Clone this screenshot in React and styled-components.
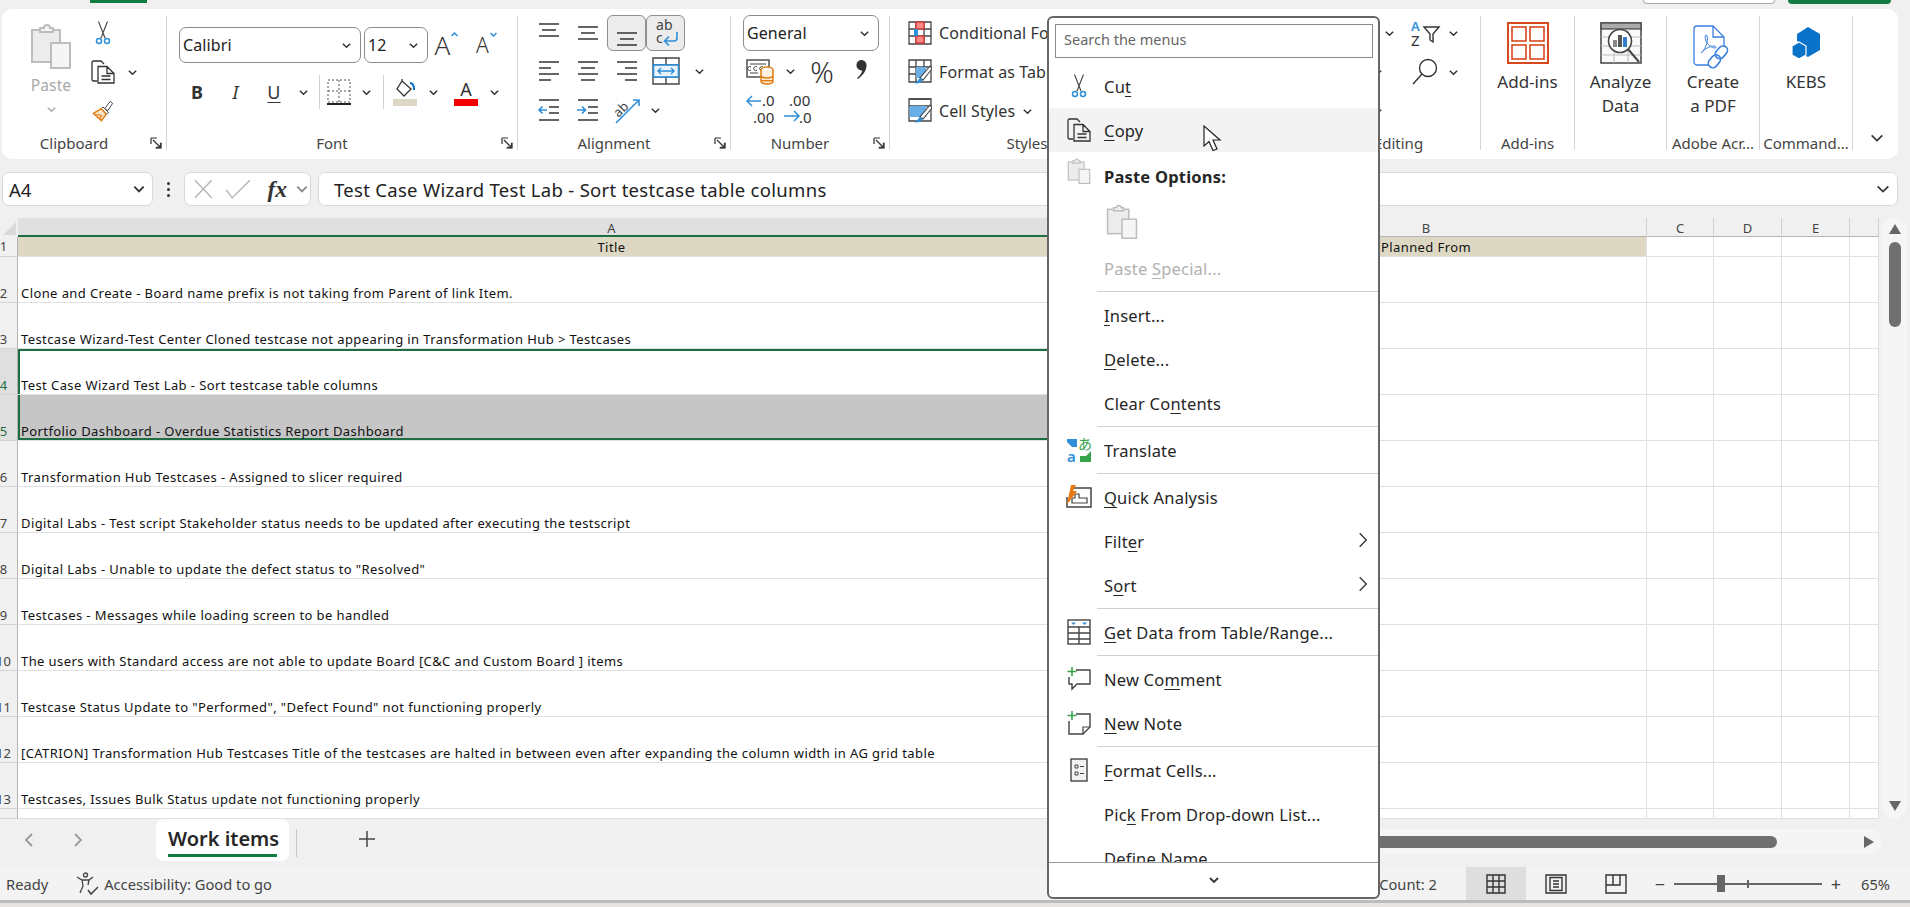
import React from 'react'
import styled, { createGlobalStyle } from 'styled-components'

const GlobalStyle = createGlobalStyle`
  html, body { margin: 0; padding: 0; background: #f0f0f0; }
  body { width: 1910px; height: 907px; overflow: hidden; font-family: "Noto Sans", "Open Sans", sans-serif; color: #262626; }
  * { box-sizing: border-box; }
`

const GREEN = '#1f6e43'
const BLUE = '#2f8fd8'

/* icons */
const Chevron = ({ size = 11, dir = 'down', color = '#333', width = 1.6 }) => {
  const paths = { down: 'M2 4l4 4 4-4', up: 'M2 8l4-4 4 4', left: 'M8 2L4 6l4 4', right: 'M4 2l4 4-4 4' }
  return (
    <svg width={size} height={size} viewBox="0 0 12 12" fill="none">
      <path d={paths[dir]} stroke={color} strokeWidth={width} />
    </svg>
  )
}

const Scissors = () => (
  <svg width="16" height="24" viewBox="0 0 16 24" fill="none">
    <path d="M3.500 0.500L10 17M12.500 0.500L6 17" stroke="#444" strokeWidth="1.1" />
    <circle cx="4" cy="20" r="2.500" stroke={BLUE} strokeWidth="1.5" />
    <circle cx="12" cy="20" r="2.500" stroke={BLUE} strokeWidth="1.5" />
  </svg>
)

const CopyIcon = () => (
  <svg width="24" height="24" viewBox="0 0 24 24" fill="none" stroke="#333" strokeWidth="1.3">
    <path d="M6 21H2.500A1.500 1.500 0 0 1 1 19.500V2.500A1.500 1.500 0 0 1 2.500 1H10l3 3" />
    <path d="M7 6.500H16l7 7V23H7zM16 6.500V13.500H23M10.500 16H19.500M10.500 19.500H19.500" />
  </svg>
)

const PainterIcon = () => (
  <svg width="24" height="24" viewBox="0 0 26 30" fill="none">
    <path d="M15 12L22 3l3 2.500-6 9z" fill="#fff" stroke="#444" strokeWidth="1.2" />
    <path d="M13 10l7 7-3 2L11 12z" fill="#fff" stroke="#444" strokeWidth="1.2" />
    <path d="M11 12L1 18l10 9 6-8z" fill="#fbe3c6" stroke="#e07c12" strokeWidth="1.8" />
    <path d="M5 19l7 2M9 25l2-5" stroke="#e07c12" strokeWidth="1.4" />
  </svg>
)

const PasteBoard = ({ w = 42, h = 46 }) => (
  <svg width={w} height={h} viewBox="0 0 42 46" fill="none" stroke="#bdbdbd" strokeWidth="2">
    <rect x="2" y="7" width="28" height="32" fill="#ececec" />
    <path d="M10 9V5h4a3 3 0 0 1 6 0h3v4z" fill="#f4f4f4" />
    <rect x="21" y="20" width="19" height="25" fill="#f5f5f5" />
  </svg>
)

const Launcher = () => (
  <svg width="12" height="12" viewBox="0 0 12 12" fill="none" stroke="#333" strokeWidth="1.2">
    <path d="M11 5.500V11H5.500M1 1h6M1 1v6" />
    <path d="M3 3l7 7M6 10.500h4.500V6" strokeWidth="1.3" />
  </svg>
)

const AlignLines = ({ rows }) => (
  <svg width="22" height="30" viewBox="0 0 22 30" stroke="#333" strokeWidth="1.5">
    {rows.map(([y, a, b]) => (
      <line key={y} x1={a} y1={y} x2={b} y2={y} />
    ))}
  </svg>
)

const IndentIcon = ({ flip }) => (
  <svg width="24" height="24" viewBox="0 0 24 24" fill="none">
    <path d="M2 2h20M12 9h10M12 15h10M2 22h20" stroke="#333" strokeWidth="1.5" />
    {flip ? (
      <path d="M1 12h8M6 8.500L9.500 12 6 15.500" stroke={BLUE} strokeWidth="1.6" />
    ) : (
      <path d="M10 12H2M5.500 8.500L2 12l3.500 3.500" stroke={BLUE} strokeWidth="1.6" />
    )}
  </svg>
)

const WrapIcon = () => (
  <svg width="26" height="34" viewBox="0 0 26 34" fill="none">
    <text x="3" y="14" fontFamily="Noto Sans, sans-serif" fontSize="14" fill="#444">ab</text>
    <text x="3" y="27" fontFamily="Noto Sans, sans-serif" fontSize="14" fill="#444">c</text>
    <path d="M24 16v6a3 3 0 0 1-3 3H12M16 20.500L11.500 25l4.500 4.500" stroke={BLUE} strokeWidth="1.6" />
  </svg>
)

const MergeIcon = () => (
  <svg width="28" height="28" viewBox="0 0 28 28" fill="none" stroke="#444" strokeWidth="1.4">
    <path d="M1 1h26v26H1zM1 8h26M1 20h26M14 1v7M14 20v7" />
    <rect x="1.500" y="8" width="25" height="12" fill="#e8f3fb" stroke={BLUE} strokeWidth="1.6" />
    <path d="M6 14h16M9 11l-3 3 3 3M19 11l3 3-3 3" stroke={BLUE} strokeWidth="1.4" />
  </svg>
)

const OrientIcon = () => (
  <svg width="34" height="30" viewBox="0 0 34 30" fill="none">
    <text x="4" y="20" transform="rotate(-45 10 16)" fontFamily="Noto Sans, sans-serif" fontSize="13" fill="#444">ab</text>
    <path d="M6 28L28 6M23 5h6v6" stroke={BLUE} strokeWidth="1.6" />
  </svg>
)

const AccountingIcon = () => (
  <svg width="30" height="30" viewBox="0 0 30 30" fill="none">
    <rect x="1" y="4" width="22" height="17" fill="#fff" stroke="#444" strokeWidth="1.4" />
    <path d="M4 8h16M4 17h8" stroke="#444" strokeWidth="1.2" />
    <path d="M5 14a2 2 0 1 1 0-3M11 14a2 2 0 1 1 0-3M17 14a2 2 0 1 1 0-3" stroke="#444" strokeWidth="1" />
    <ellipse cx="21" cy="14" rx="6" ry="3" fill="#fff" stroke="#e07c12" strokeWidth="1.5" />
    <path d="M15 14v11c0 4 12 4 12 0V14M15 19c0 4 12 4 12 0M15 24c0 1 12 1 12 0" fill="#fdf0df" stroke="#e07c12" strokeWidth="1.5" />
  </svg>
)

const CommaIcon = () => (
  <svg width="11" height="19" viewBox="0 0 11 19" fill="#333">
    <path d="M5.500 0a5 5 0 0 1 5 5.500c0 5-3.500 10-8.500 13.500L1 18c3-2.500 4.800-5 5.200-7.600A5 5 0 0 1 .5 5 5 5 0 0 1 5.500 0z" />
  </svg>
)

const DecimalIcon = ({ more }) => (
  <svg width="32" height="34" viewBox="0 0 32 34" fill="none">
    <text x={more ? 6 : 17} y="13" fontFamily="Noto Sans, sans-serif" fontSize="15" fill="#333">{more ? '.00' : '.0'}</text>
    <text x={more ? 16 : 8} y="30" fontFamily="Noto Sans, sans-serif" fontSize="15" fill="#333">{more ? '.0' : '.00'}</text>
    {more ? (
      <path d="M1 23h15M11 18l5 5-5 5" stroke={BLUE} strokeWidth="1.5" />
    ) : (
      <path d="M16 8H2M7 3L2 8l5 5" stroke={BLUE} strokeWidth="1.5" />
    )}
  </svg>
)

const CondFormatIcon = () => (
  <svg width="24" height="24" viewBox="0 0 24 24" fill="none" stroke="#444" strokeWidth="1.3">
    <path d="M1 1h22v22H1zM1 8h22M1 15h22M8 1v22M16 1v22" />
    <rect x="8" y="1" width="8" height="7" fill="#f88" stroke="#d33" />
    <rect x="8" y="15" width="8" height="7" fill="#f88" stroke="#d33" />
    <rect x="6" y="8" width="4" height="7" fill={BLUE} stroke="none" />
  </svg>
)

const TableStyleIcon = ({ solid }) => (
  <svg width="24" height="26" viewBox="0 0 24 26" fill="none" stroke="#444" strokeWidth="1.3">
    <path d="M1 1h22v22H1z" />
    {!solid && <path d="M1 8h22M1 15h12M8 1v22M16 1v7" />}
    {solid && <path d="M1 8h22M1 1h22" />}
    <rect x={solid ? 1.5 : 8} y="8" width={solid ? 17 : 10} height="11" fill="#6aaee8" stroke="none" />
    <path d="M22 7L12 19l3 2L24 10z" fill="#fff" stroke="#444" strokeWidth="1.1" />
    <path d="M12 19c-2 1-2 4-6 5 3 1 7 0 9-3z" fill={BLUE} stroke="none" />
  </svg>
)

const SortFilterIcon = () => (
  <svg width="32" height="28" viewBox="0 0 32 28" fill="none">
    <text x="1" y="12" fontFamily="Noto Sans, sans-serif" fontSize="13" fontWeight="600" fill={BLUE}>A</text>
    <text x="1" y="27" fontFamily="Noto Sans, sans-serif" fontSize="15" fill="#333">Z</text>
    <path d="M14 8h15l-6 7v8l-3-2v-6z" stroke="#333" strokeWidth="1.4" />
  </svg>
)

const FindIcon = () => (
  <svg width="28" height="30" viewBox="0 0 28 30" fill="none" stroke="#333" strokeWidth="1.4">
    <circle cx="16" cy="11" r="8.500" />
    <path d="M10 17L1 27" />
  </svg>
)

const AddInsIcon = () => (
  <svg width="42" height="42" viewBox="0 0 42 42" fill="none" stroke="#d9481c" strokeWidth="1.6">
    <rect x="1" y="1" width="40" height="40" strokeWidth="2" />
    <rect x="5" y="5" width="14" height="14" />
    <rect x="23" y="5" width="14" height="14" />
    <rect x="5" y="23" width="14" height="14" />
    <rect x="23" y="23" width="14" height="14" />
  </svg>
)

const AnalyzeIcon = () => (
  <svg width="42" height="42" viewBox="0 0 42 42" fill="none">
    <rect x="1" y="1" width="40" height="40" fill="#fafafa" stroke="#444" strokeWidth="1.5" />
    <rect x="1" y="1" width="40" height="6" fill="#aaa" stroke="#444" strokeWidth="1.200" />
    <path d="M1 15h40M1 24h40M1 33h40M14 7v34M28 7v34" stroke="#bbb" />
    <circle cx="20" cy="19" r="11.500" fill="#fff" stroke="#444" strokeWidth="1.6" />
    <path d="M28 27l11 13" stroke="#444" strokeWidth="2" />
    <rect x="13" y="18" width="4" height="7" fill="#888" />
    <rect x="18" y="13" width="4" height="12" fill="#555" />
    <rect x="23" y="15" width="4" height="10" fill="#2f80c8" />
  </svg>
)

const AcrobatIcon = () => (
  <svg width="40" height="44" viewBox="0 0 40 44" fill="none" stroke="#3a7fe0" strokeWidth="1.3">
    <path d="M16 40H4a3 3 0 0 1-3-3V4a3 3 0 0 1 3-3h16l11 11v10" />
    <path d="M20 1v11h11" />
    <path d="M8 28c3-1 8-12 6-17-1-3-3 0-1 5 2 4 6 7 9 7 2 0 1-2-1-2-4 0-10 3-13 7z" strokeWidth="1" />
    <rect x="24" y="20" width="9" height="14" rx="4.500" transform="rotate(40 28 27)" strokeWidth="1.6" />
    <rect x="17" y="29" width="9" height="14" rx="4.500" transform="rotate(40 21 36)" strokeWidth="1.6" />
  </svg>
)

const KebsIcon = () => (
  <svg width="30" height="32" viewBox="0 0 30 32" fill="#0a72c9">
    <path d="M17 0l12 7v16l-12 7-4-2V18l-7-4V7z" />
    <path d="M8 15l7 4v9l-7 4-7-4v-9z" stroke="#fff" strokeWidth="1.2" />
  </svg>
)

const TranslateIcon = () => (
  <svg width="26" height="26" viewBox="0 0 26 26" fill="none">
    <path d="M1 2h10v8H6L1 5z" fill={BLUE} />
    <text x="1" y="25" fontFamily="Noto Sans, sans-serif" fontSize="15" fontWeight="600" fill={BLUE}>a</text>
    <text x="12" y="12" fontFamily="Noto Sans CJK JP, sans-serif" fontSize="14" fill="#37a34a">あ</text>
    <path d="M25 25H14v-6h6l5-5z" fill="#37a34a" />
  </svg>
)

const QuickAnalysisIcon = () => (
  <svg width="26" height="24" viewBox="0 0 26 24" fill="none">
    <path d="M8 3H25V22H1V12" stroke="#444" strokeWidth="1.5" />
    <path d="M6 18h15v-5H13V9h-4v4H6z" stroke="#444" strokeWidth="1.2" />
    <path d="M1 19L5 0h5L7 6h4L3 17z" fill="#e87a11" />
  </svg>
)

const DataTableIcon = () => (
  <svg width="24" height="26" viewBox="0 0 24 26" fill="none" stroke="#444" strokeWidth="1.4">
    <rect x="1" y="1" width="22" height="24" />
    <path d="M1 8h22M1 14h22M1 20h22M12 8v17" />
    <path d="M4 3.500h5L6.500 6zM15 3.500h5L17.500 6z" fill={BLUE} stroke="none" />
  </svg>
)

const CommentIcon = () => (
  <svg width="24" height="24" viewBox="0 0 24 24" fill="none">
    <path d="M9 3H23V17H10L5 22V17H2V10" stroke="#444" strokeWidth="1.4" />
    <path d="M5 0v9M0.500 4.500h9" stroke="#37a34a" strokeWidth="1.6" />
  </svg>
)

const NoteIcon = () => (
  <svg width="24" height="24" viewBox="0 0 24 24" fill="none">
    <path d="M9 3H23V16L16 23H2V10" stroke="#444" strokeWidth="1.4" />
    <path d="M23 16h-7v7" stroke="#444" strokeWidth="1.2" />
    <path d="M5 0v9M0.500 4.500h9" stroke="#37a34a" strokeWidth="1.6" />
  </svg>
)

const FormatCellsIcon = () => (
  <svg width="18" height="24" viewBox="0 0 18 24" fill="#f2f2f2" stroke="#444" strokeWidth="1.4">
    <rect x="1" y="1" width="16" height="22" />
    <path d="M5 7h3v3H5zM5 14h3v3H5z" strokeWidth="1" />
    <path d="M10 8.500h4M10 15.500h4" strokeWidth="1" />
  </svg>
)

const CursorIcon = () => (
  <svg width="20" height="28" viewBox="0 0 20 28" fill="#fff" stroke="#222" strokeWidth="1.2">
    <path d="M1 1v20l5-4.500 4 9 4-1.500-4-9h7z" />
  </svg>
)

const AccessIcon = () => (
  <svg width="24" height="24" viewBox="0 0 24 24" fill="none" stroke="#444" strokeWidth="1.3">
    <circle cx="9.500" cy="3" r="2" />
    <path d="M1 5l5 3h7l4-3M6 8l1 6-3 7M13 8l-1 5" />
    <path d="M12 18l3 4 7-7" strokeWidth="1.5" />
  </svg>
)

const NormalViewIcon = () => (
  <svg width="20" height="20" viewBox="0 0 20 20" fill="none" stroke="#333" strokeWidth="1.4">
    <path d="M1 1h18v18H1zM1 7h18M1 13h18M7 1v18M13 1v18" />
  </svg>
)

const PageViewIcon = () => (
  <svg width="22" height="20" viewBox="0 0 22 20" fill="none" stroke="#333" strokeWidth="1.4">
    <path d="M1 1h20v18H1zM5 3.500h12v13H5zM8 7h6M8 10h6M8 13h6" />
  </svg>
)

const BreakViewIcon = () => (
  <svg width="22" height="20" viewBox="0 0 22 20" fill="none" stroke="#333" strokeWidth="1.4">
    <path d="M1 1h20v18H1zM1 11h14V1M8 1v10" />
  </svg>
)

/* layout */
const Page = styled.div`
  width: 1910px;
  height: 907px;
  position: relative;
  display: flex;
  flex-direction: column;
  overflow: hidden;
`

const TopStrip = styled.div`
  height: 9px;
  flex: none;
  display: flex;
  align-items: flex-start;
`

const TabMark = styled.div`
  width: 57px;
  height: 3px;
  margin-left: 90px;
  background: #107c41;
`

const ShareButton = styled.div`
  width: 132px;
  height: 4px;
  margin-left: auto;
  background: #fff;
  border: 1px solid #aaa;
  border-top: none;
  border-radius: 0 0 5px 5px;
`

const GreenButton = styled.div`
  width: 103px;
  height: 4px;
  margin: 0 19px 0 13px;
  background: #107c41;
  border-radius: 0 0 5px 5px;
`

const Ribbon = styled.div`
  height: 150px;
  flex: none;
  margin: 0 12px 0 2px;
  padding: 7px 0 9px;
  display: flex;
  background: #fff;
  border-radius: 10px;
  font-size: 16px;
  letter-spacing: 0.1px;
  color: #333;
`

const Group = styled.section`
  width: ${({ $w }) => $w}px;
  flex: none;
  display: flex;
  flex-direction: column;
  border-right: 1px solid #d4d4d4;
`

const GroupBody = styled.div`
  flex: 1;
  min-height: 0;
  margin-top: ${({ $top }) => $top || 0}px;
  padding-left: ${({ $left }) => $left || 0}px;
  display: ${({ $row }) => ($row ? 'flex' : 'block')};
`

const GroupFooter = styled.div`
  height: 14px;
  flex: none;
  display: flex;
  align-items: center;
`

const GroupLabel = styled.div`
  flex: 1;
  text-align: center;
  font-size: 15px;
  line-height: 14px;
  letter-spacing: 0;
  color: #444;
  white-space: nowrap;
`

const LauncherSlot = styled.div`
  width: 20px;
  display: flex;
  justify-content: center;
`

const ToolRow = styled.div`
  display: grid;
  grid-template-columns: ${({ $cols }) => $cols};
  column-gap: ${({ $colGap }) => $colGap || 0}px;
  height: ${({ $h }) => $h || 34}px;
  margin-bottom: ${({ $gap }) => ($gap === undefined ? 5 : $gap)}px;
  align-items: center;
`

const Tool = styled.div`
  display: flex;
  align-items: center;
  justify-content: ${({ $justify }) => $justify || 'center'};
  height: 100%;
  padding-left: ${({ $pad }) => $pad || 0}px;
  padding-bottom: ${({ $lift }) => $lift || 0}px;
  border-radius: 6px;
  ${({ $active }) => $active && 'background: #ececec; border: 1px solid #8f8f8f;'}
`

const Divider = styled.div`
  width: 1px;
  height: 34px;
  margin: 0 auto;
  background: #d0d0d0;
`

const PasteColumn = styled.div`
  width: 48px;
  margin: 7px 16px 0 25px;
  display: flex;
  flex-direction: column;
  align-items: center;
  color: #a8a8a8;
  font-size: 15.5px;
  line-height: 20px;
`

const PasteLabel = styled.div`
  margin: 6px 0 9px;
`

const SelectBox = styled.div`
  width: ${({ $w }) => $w}px;
  height: 36px;
  padding: 0 8px 0 3px;
  display: flex;
  align-items: center;
  justify-content: space-between;
  background: #fff;
  border: 1px solid #8c8c8c;
  border-radius: 7px;
  font-size: 16px;
  color: #222;
`

const FontGlyph = styled.span`
  font-size: ${({ $s }) => $s}px;
  font-weight: ${({ $w }) => $w || 400};
  font-style: ${({ $i }) => ($i ? 'italic' : 'normal')};
  text-decoration: ${({ $u }) => ($u ? 'underline' : 'none')};
  text-underline-offset: 3px;
  line-height: 1;
  color: #333;
`

const ColourGlyph = styled.span`
  display: flex;
  flex-direction: column;
  align-items: center;
  width: 24px;
  font-size: 18px;
  line-height: 20px;
  color: #333;

  &::after {
    content: '';
    width: 24px;
    height: 7px;
    background: ${({ $c }) => $c};
  }
`

const GrowGlyph = styled.span`
  display: flex;
  align-items: flex-start;
  font-size: ${({ $s }) => $s}px;
  line-height: 30px;
  font-weight: 300;
  color: #333;
`

const StyleRow = styled.div`
  height: 34px;
  margin-bottom: 5px;
  padding-left: 18px;
  display: flex;
  align-items: center;
  gap: 7px;
  white-space: nowrap;
`

const BigButton = styled.div`
  flex: 1;
  display: flex;
  flex-direction: column;
  align-items: center;
  padding-top: ${({ $top }) => $top || 6}px;
  font-size: 17px;
  line-height: 24px;
  letter-spacing: 0;
  color: #333;
  text-align: center;
`

const BigIconSlot = styled.div`
  height: ${({ $h }) => $h || 48}px;
  display: flex;
  align-items: flex-start;
`

const CollapseSlot = styled.div`
  flex: 1;
  display: flex;
  align-items: flex-end;
  justify-content: center;
  padding: 0 0 4px 2px;
`

const FormulaBar = styled.div`
  height: 34px;
  flex: none;
  margin: 13px 12px 0 2px;
  display: flex;
  align-items: stretch;
`

const FormulaBox = styled.div`
  width: ${({ $w }) => ($w ? `${$w}px` : 'auto')};
  flex: ${({ $w }) => ($w ? 'none' : 1)};
  margin-left: ${({ $ml }) => $ml || 0}px;
  padding: 0 ${({ $pr }) => $pr || 0}px 0 ${({ $pl }) => $pl || 0}px;
  display: flex;
  align-items: center;
  background: #fff;
  border: 1px solid #d9d9d9;
  border-radius: 7px;
  font-size: 18.500px;
  letter-spacing: ${({ $w }) => ($w ? 0 : 0.3)}px;
  color: #222;
`

const Grip = styled.div`
  width: 31px;
  display: flex;
  flex-direction: column;
  align-items: center;
  justify-content: center;
  gap: 3px;

  i {
    width: 3px;
    height: 3px;
    background: #333;
    border-radius: 50%;
  }
`

const Spread = styled.div`
  margin-left: auto;
  display: flex;
`

const Main = styled.div`
  height: 601px;
  flex: none;
  margin-top: 12px;
  display: flex;
`

const SheetGrid = styled.div`
  width: 1879px;
  display: grid;
  grid-template-columns: 18px 1188px 441px 67px 68px 68px 29px;
  grid-template-rows: 19px 20px repeat(12, 46px) 10px;
  background: #fff;
  font-size: 13px;
  color: #111;
  border-bottom: 1px solid #d9d9d9;
`

const Corner = styled.div`
  background: #f0f0f0;
  position: relative;

  &::after {
    content: '';
    position: absolute;
    right: 2px;
    bottom: 2px;
    border-style: solid;
    border-width: 0 0 13px 13px;
    border-color: transparent transparent #dadada transparent;
  }
`

const ColHead = styled.div`
  display: flex;
  align-items: center;
  justify-content: center;
  background: ${({ $on }) => ($on ? '#e0e0e0' : '#f0f0f0')};
  border-right: 1px solid #cfcfcf;
  box-shadow: inset 0 ${({ $on }) => ($on ? '-2px 0 0 ' + GREEN : '-1px 0 0 #b5b5b5')};
  color: #444;
  font-size: 13px;
`

const RowHead = styled.div`
  display: flex;
  align-items: ${({ $first }) => ($first ? 'center' : 'flex-end')};
  justify-content: center;
  padding: 0 10px 1px 0;
  overflow: hidden;
  white-space: nowrap;
  background: ${({ $on }) => ($on ? '#dfdfdf' : '#f0f0f0')};
  border-right: 1px solid #b5b5b5;
  border-bottom: 1px solid #d4d4d4;
  color: ${({ $on }) => ($on ? GREEN : '#444')};
  font-size: 13px;
  line-height: 15px;
`

const Cell = styled.div`
  display: flex;
  align-items: ${({ $head }) => ($head ? 'center' : 'flex-end')};
  justify-content: ${({ $head }) => ($head ? 'center' : 'flex-start')};
  padding: ${({ $head }) => ($head ? '2px 3px 0' : '0 3px 1px')};
  overflow: hidden;
  white-space: nowrap;
  line-height: 15px;
  letter-spacing: 0.41px;
  background: ${({ $bg }) => $bg || '#fff'};
  border-right: 1px solid #e0e0e0;
  border-bottom: 1px solid #e0e0e0;
  box-shadow: ${({ $sel }) =>
    $sel === 'top'
      ? `inset 2px 2px 0 ${GREEN}`
      : $sel === 'bottom'
        ? `inset 2px -2px 0 ${GREEN}`
        : 'none'};
`

const VTrack = styled.div`
  width: 25px;
  margin-left: 3px;
  display: flex;
  flex-direction: column;
  align-items: center;
  background: #f5f5f5;
  border-radius: 12px;
`

const Arrow = styled.div`
  width: 0;
  height: 0;
  flex: none;
  border-style: solid;
  ${({ $dir }) =>
    $dir === 'up'
      ? 'border-width: 0 6.5px 10px; border-color: transparent transparent #666; margin-top: 6px;'
      : $dir === 'down'
        ? 'border-width: 10px 6.5px 0; border-color: #666 transparent transparent; margin: auto 0 8px;'
        : 'border-width: 6.5px 0 6.5px 10px; border-color: transparent transparent transparent #666; margin-left: auto;'}
`

const VThumb = styled.div`
  width: 12px;
  height: 85px;
  margin-top: 8px;
  background: #707070;
  border-radius: 6px;
`

const SheetBar = styled.div`
  height: 48px;
  flex: none;
  display: flex;
  align-items: flex-start;
`

const SheetNav = styled.div`
  width: 156px;
  height: 42px;
  padding-left: 20px;
  display: flex;
  align-items: center;
  gap: 31px;
`

const SheetTab = styled.div`
  width: 133px;
  height: 42px;
  padding: 6px 12px 0;
  background: #fff;
  border-radius: 8px;
  font-size: 20px;
  font-weight: 600;
  line-height: 28px;
  color: #262626;
  text-align: center;
  white-space: nowrap;

  &::after {
    content: '';
    display: block;
    height: 3px;
    margin-top: 1px;
    background: #107c41;
  }
`

const TabSep = styled.div`
  width: 1px;
  height: 28px;
  margin: 10px 0 0 7px;
  background: #c8c8c8;
`

const AddSheet = styled.div`
  margin: 11px 0 0 61px;
  height: 20px;
`

const HTrack = styled.div`
  height: 26px;
  width: 780px;
  margin: 10px 28px 0 auto;
  padding: 0 8px 0 0;
  display: flex;
  align-items: center;
  background: #f5f5f5;
  border-radius: 13px;
`

const HThumb = styled.div`
  width: 675px;
  height: 12px;
  background: #707070;
  border-radius: 6px;
`

const StatusBar = styled.div`
  height: 33px;
  flex: none;
  padding: 0 20px 0 6px;
  display: flex;
  align-items: center;
  background: #f3f3f3;
  font-size: 14.700px;
  color: #444;
  white-space: nowrap;
`

const AccessBlock = styled.div`
  margin-left: 28px;
  display: flex;
  align-items: center;
  gap: 4px;
`

const CountText = styled.div`
  margin-left: auto;
  margin-right: 29px;
`

const ViewButton = styled.div`
  width: 60px;
  height: 33px;
  display: flex;
  align-items: center;
  justify-content: center;
  background: ${({ $on }) => ($on ? '#dedede' : 'transparent')};
`

const ZoomSign = styled.div`
  width: 18px;
  margin-left: ${({ $ml }) => $ml || 0}px;
  text-align: center;
  font-size: 18px;
  line-height: 20px;
`

const ZoomTrack = styled.div`
  width: 148px;
  height: 2px;
  margin: 0 5px;
  position: relative;
  background: #666;
`

const ZoomThumb = styled.div`
  position: absolute;
  left: 43px;
  top: -8px;
  width: 8px;
  height: 17px;
  background: #666;
`

const ZoomTick = styled.div`
  position: absolute;
  left: 73px;
  top: -3px;
  width: 2px;
  height: 8px;
  background: #666;
`

const ZoomValue = styled.div`
  margin-left: 16px;
`

const BottomEdge = styled.div`
  flex: 1;
  background: #e7e5e4;
  border-top: 3px solid #bcbcbc;
`

/* context menu */
const Menu = styled.div`
  position: absolute;
  left: 1047px;
  top: 16px;
  width: 333px;
  height: 883px;
  display: flex;
  flex-direction: column;
  background: #fff;
  border: 2px solid #666;
  border-radius: 6px;
  font-size: 16.500px;
  letter-spacing: 0.2px;
  color: #262626;
  overflow: hidden;
`

const MenuSearch = styled.div`
  height: 34px;
  flex: none;
  margin: 6px 5px 0 6px;
  padding: 0 0 4px 8px;
  display: flex;
  align-items: center;
  border: 1px solid #8a8a8a;
  font-size: 14.500px;
  letter-spacing: 0;
  color: #666;
`

const MenuList = styled.div`
  flex: 1;
  min-height: 0;
  padding-top: 6px;
  overflow: hidden;
`

const MenuItem = styled.div`
  height: ${({ $h }) => $h || 44}px;
  padding: 0 5px 0 0;
  display: flex;
  align-items: center;
  white-space: nowrap;
  background: ${({ $hover }) => ($hover ? '#f3f3f3' : 'transparent')};
  color: ${({ $muted }) => ($muted ? '#b0b0b0' : 'inherit')};
  font-weight: ${({ $bold }) => ($bold ? 700 : 400)};

  u {
    text-underline-offset: 3px;
    text-decoration-thickness: 1px;
  }
`

const MenuIcon = styled.div`
  width: 55px;
  height: 30px;
  flex: none;
  padding-left: 5px;
  display: flex;
  align-items: center;
  justify-content: center;
  margin-top: ${({ $top }) => $top || 0}px;
`

const MenuText = styled.span`
  display: block;
`

const MenuArrow = styled.div`
  margin-left: auto;
  display: flex;
  margin-bottom: 2px;
`

const MenuSep = styled.div`
  height: 3px;
  margin-left: 48px;
  padding-top: 1px;

  &::after {
    content: '';
    display: block;
    height: 1px;
    background: #cfcfcf;
  }
`

const PasteRow = styled.div`
  height: 45px;
  padding: 0 0 4px 57px;
  display: flex;
  align-items: center;
`

const MenuFooter = styled.div`
  height: 35px;
  flex: none;
  display: flex;
  align-items: center;
  justify-content: center;
  border-top: 1px solid #999;
`

const PointerSlot = styled.div`
  position: absolute;
  left: 1203px;
  top: 125px;
`

const titles = [
  'Clone and Create - Board name prefix is not taking from Parent of link Item.',
  'Testcase Wizard-Test Center Cloned testcase not appearing in Transformation Hub > Testcases',
  'Test Case Wizard Test Lab - Sort testcase table columns',
  'Portfolio Dashboard - Overdue Statistics Report Dashboard',
  'Transformation Hub Testcases - Assigned to slicer required',
  'Digital Labs - Test script Stakeholder status needs to be updated after executing the testscript',
  'Digital Labs - Unable to update the defect status to "Resolved"',
  'Testcases - Messages while loading screen to be handled',
  'The users with Standard access are not able to update Board [C&C and Custom Board ] items',
  'Testcase Status Update to "Performed", "Defect Found" not functioning properly',
  '[CATRION] Transformation Hub Testcases Title of the testcases are halted in between even after expanding the column width in AG grid table',
  'Testcases, Issues Bulk Status update not functioning properly',
]

const ALIGN_COLS = '39px 39px 39px 39px 29px'
const FONT_COLS = '36px 41px 36px 22px 10px 30px 24px 10px 34px 22px 44px 12px'

const RibbonBar = () => (
  <Ribbon>
    <Group $w={165}>
      <GroupBody $row>
        <PasteColumn>
          <PasteBoard />
          <PasteLabel>Paste</PasteLabel>
          <Chevron color="#aaa" />
        </PasteColumn>
        <div>
          <ToolRow $cols="24px 35px"><Tool><Scissors /></Tool></ToolRow>
          <ToolRow $cols="24px 35px"><Tool><CopyIcon /></Tool><Tool><Chevron /></Tool></ToolRow>
          <ToolRow $cols="24px 35px"><Tool><PainterIcon /></Tool></ToolRow>
        </div>
      </GroupBody>
      <GroupFooter><GroupLabel>Clipboard</GroupLabel><LauncherSlot><Launcher /></LauncherSlot></GroupFooter>
    </Group>

    <Group $w={351}>
      <GroupBody $top={11} $left={12}>
        <ToolRow $cols="182px 64px 32px 42px" $colGap={3} $h={36} $gap={12}>
          <SelectBox $w={182}>Calibri<Chevron /></SelectBox>
          <SelectBox $w={64}>12<Chevron /></SelectBox>
          <Tool>
            <GrowGlyph $s={26}>A<Chevron size={9} dir="up" color={BLUE} width={2} /></GrowGlyph>
          </Tool>
          <Tool>
            <GrowGlyph $s={21}>A<Chevron size={9} color={BLUE} width={2} /></GrowGlyph>
          </Tool>
        </ToolRow>
        <ToolRow $cols={FONT_COLS}>
          <Tool><FontGlyph $s={18} $w={700}>B</FontGlyph></Tool>
          <Tool><FontGlyph $s={18} $i>I</FontGlyph></Tool>
          <Tool><FontGlyph $s={18} $u>U</FontGlyph></Tool>
          <Tool><Chevron /></Tool>
          <Divider />
          <Tool>
            <svg width="24" height="26" viewBox="0 0 24 26" fill="none" stroke="#555" strokeDasharray="2 2">
              <path d="M1 1h22v22H1zM12 1v22M1 12h22" />
              <path d="M0 25h24" stroke="#222" strokeWidth="2" strokeDasharray="none" />
            </svg>
          </Tool>
          <Tool><Chevron /></Tool>
          <Divider />
          <Tool>
            <ColourGlyph $c="#ddd8c4">
              <svg width="24" height="20" viewBox="0 0 24 20" fill="none">
                <path d="M9 2l9 8-7 7-7-7zM9 2V0" stroke="#333" strokeWidth="1.3" />
                <path d="M17 4c3 0 4 3 4 7" stroke="#0a72c9" strokeWidth="2" />
              </svg>
            </ColourGlyph>
          </Tool>
          <Tool><Chevron /></Tool>
          <Tool><ColourGlyph $c="#f00000">A</ColourGlyph></Tool>
          <Tool><Chevron /></Tool>
        </ToolRow>
      </GroupBody>
      <GroupFooter><GroupLabel>Font</GroupLabel><LauncherSlot><Launcher /></LauncherSlot></GroupFooter>
    </Group>

    <Group $w={213}>
      <GroupBody $top={-1} $left={11}>
        <ToolRow $cols={ALIGN_COLS} $h={36} $gap={2}>
          <Tool><AlignLines rows={[[6, 1, 21], [12, 4, 18], [18, 1, 21]]} /></Tool>
          <Tool><AlignLines rows={[[9, 1, 21], [15, 4, 18], [21, 1, 21]]} /></Tool>
          <Tool $active><AlignLines rows={[[15, 1, 21], [21, 4, 18], [27, 1, 21]]} /></Tool>
          <Tool $active><WrapIcon /></Tool>
        </ToolRow>
        <ToolRow $cols={ALIGN_COLS} $h={36} $gap={3}>
          <Tool><AlignLines rows={[[6, 1, 21], [12, 1, 13], [18, 1, 21], [24, 1, 13]]} /></Tool>
          <Tool><AlignLines rows={[[6, 1, 21], [12, 4, 18], [18, 1, 21], [24, 4, 18]]} /></Tool>
          <Tool><AlignLines rows={[[6, 1, 21], [12, 9, 21], [18, 1, 21], [24, 9, 21]]} /></Tool>
          <Tool><MergeIcon /></Tool>
          <Tool><Chevron /></Tool>
        </ToolRow>
        <ToolRow $cols={ALIGN_COLS} $h={36}>
          <Tool><IndentIcon /></Tool>
          <Tool><IndentIcon flip /></Tool>
          <Tool><OrientIcon /></Tool>
          <Tool $justify="flex-start" $pad={4}><Chevron /></Tool>
        </ToolRow>
      </GroupBody>
      <GroupFooter><GroupLabel>Alignment</GroupLabel><LauncherSlot><Launcher /></LauncherSlot></GroupFooter>
    </Group>

    <Group $w={159}>
      <GroupBody $top={-1} $left={12}>
        <ToolRow $cols="136px" $h={36} $gap={2}>
          <SelectBox $w={136}>General<Chevron /></SelectBox>
        </ToolRow>
        <ToolRow $cols="36px 22px 42px 36px" $h={36} $gap={3}>
          <Tool><AccountingIcon /></Tool>
          <Tool><Chevron /></Tool>
          <Tool><FontGlyph $s={29} $w={300}>%</FontGlyph></Tool>
          <Tool $lift={4}><CommaIcon /></Tool>
        </ToolRow>
        <ToolRow $cols="36px 2px 36px" $h={36}>
          <Tool><DecimalIcon /></Tool>
          <span />
          <Tool><DecimalIcon more /></Tool>
        </ToolRow>
      </GroupBody>
      <GroupFooter><GroupLabel>Number</GroupLabel><LauncherSlot><Launcher /></LauncherSlot></GroupFooter>
    </Group>

    <Group $w={275}>
      <GroupBody>
        <StyleRow><CondFormatIcon />Conditional Formatting<Chevron /></StyleRow>
        <StyleRow><TableStyleIcon />Format as Table<Chevron /></StyleRow>
        <StyleRow><TableStyleIcon solid />Cell Styles<Chevron /></StyleRow>
      </GroupBody>
      <GroupFooter><GroupLabel>Styles</GroupLabel></GroupFooter>
    </Group>

    <Group $w={152}>
      <GroupBody />
      <GroupFooter><GroupLabel>Cells</GroupLabel></GroupFooter>
    </Group>

    <Group $w={164}>
      <GroupBody>
        <ToolRow $cols="66px 12px 13px 36px 3px 12px">
          <span /><Tool><Chevron /></Tool><span /><Tool><SortFilterIcon /></Tool><span /><Tool><Chevron /></Tool>
        </ToolRow>
        <ToolRow $cols="54px 12px 25px 36px 3px 12px">
          <span /><Tool><Chevron /></Tool><span /><Tool><FindIcon /></Tool><span /><Tool><Chevron /></Tool>
        </ToolRow>
        <ToolRow $cols="54px 12px">
          <span /><Tool><Chevron /></Tool>
        </ToolRow>
      </GroupBody>
      <GroupFooter><GroupLabel>Editing</GroupLabel></GroupFooter>
    </Group>

    <Group $w={94}>
      <BigButton><BigIconSlot><AddInsIcon /></BigIconSlot>Add-ins</BigButton>
      <GroupFooter><GroupLabel>Add-ins</GroupLabel></GroupFooter>
    </Group>

    <Group $w={92}>
      <BigButton><BigIconSlot><AnalyzeIcon /></BigIconSlot>Analyze<br />Data</BigButton>
      <GroupFooter><GroupLabel>&nbsp;</GroupLabel></GroupFooter>
    </Group>

    <Group $w={93}>
      <BigButton $top={9}><BigIconSlot $h={45}><AcrobatIcon /></BigIconSlot>Create<br />a PDF</BigButton>
      <GroupFooter><GroupLabel>Adobe Acr...</GroupLabel></GroupFooter>
    </Group>

    <Group $w={93}>
      <BigButton $top={11}><BigIconSlot $h={43}><KebsIcon /></BigIconSlot>KEBS</BigButton>
      <GroupFooter><GroupLabel>Command...</GroupLabel></GroupFooter>
    </Group>

    <CollapseSlot><Chevron size={16} width={1.2} /></CollapseSlot>
  </Ribbon>
)

const Formula = () => (
  <FormulaBar>
    <FormulaBox $w={151} $pl={6} $pr={6}>A4<Spread><Chevron size={14} /></Spread></FormulaBox>
    <Grip><i /><i /><i /></Grip>
    <FormulaBox $w={127} $pl={8} $pr={1}>
      <svg width="104" height="28" viewBox="0 0 104 28" fill="none">
        <path d="M2 5l17 18M19 5L2 23" stroke="#b4b4b4" strokeWidth="1.4" />
        <path d="M34 15l6 8L58 5" stroke="#b4b4b4" strokeWidth="1.4" />
        <text x="76" y="22" fontFamily="Liberation Serif, serif" fontStyle="italic" fontWeight="700" fontSize="24" fill="#333">fx</text>
      </svg>
      <Spread><Chevron size={14} color="#888" /></Spread>
    </FormulaBox>
    <FormulaBox $ml={7} $pl={15} $pr={6}>
      Test Case Wizard Test Lab - Sort testcase table columns
      <Spread><Chevron size={16} width={1.2} /></Spread>
    </FormulaBox>
  </FormulaBar>
)

const Sheet = () => (
  <Main>
    <SheetGrid>
      <Corner />
      <ColHead $on>A</ColHead>
      <ColHead>B</ColHead>
      <ColHead>C</ColHead>
      <ColHead>D</ColHead>
      <ColHead>E</ColHead>
      <ColHead />

      <RowHead $first>1</RowHead>
      <Cell $head $bg="#ddd8c4">Title</Cell>
      <Cell $head $bg="#ddd8c4">Planned From</Cell>
      <Cell /><Cell /><Cell /><Cell />

      {titles.map((title, i) => {
        const row = i + 2
        const on = row === 4 || row === 5
        return (
          <React.Fragment key={row}>
            <RowHead $on={on}>{row}</RowHead>
            <Cell $bg={row === 5 ? '#c6c6c6' : undefined} $sel={row === 4 ? 'top' : row === 5 ? 'bottom' : undefined}>{title}</Cell>
            <Cell /><Cell /><Cell /><Cell /><Cell />
          </React.Fragment>
        )
      })}

      <RowHead>&nbsp;</RowHead>
      <Cell /><Cell /><Cell /><Cell /><Cell /><Cell />
    </SheetGrid>
    <VTrack>
      <Arrow $dir="up" />
      <VThumb />
      <Arrow $dir="down" />
    </VTrack>
  </Main>
)

const Tabs = () => (
  <SheetBar>
    <SheetNav>
      <Chevron size={18} dir="left" color="#999" width={1.2} />
      <Chevron size={18} dir="right" color="#999" width={1.2} />
    </SheetNav>
    <SheetTab>Work items</SheetTab>
    <TabSep />
    <AddSheet>
      <svg width="18" height="18" viewBox="0 0 18 18" stroke="#444" strokeWidth="1.5">
        <path d="M9 1v16M1 9h16" />
      </svg>
    </AddSheet>
    <HTrack>
      <HThumb />
      <Arrow $dir="right" />
    </HTrack>
  </SheetBar>
)

const Status = () => (
  <StatusBar>
    Ready
    <AccessBlock><AccessIcon />Accessibility: Good to go</AccessBlock>
    <CountText>Count: 2</CountText>
    <ViewButton $on><NormalViewIcon /></ViewButton>
    <ViewButton><PageViewIcon /></ViewButton>
    <ViewButton><BreakViewIcon /></ViewButton>
    <ZoomSign $ml={5}>−</ZoomSign>
    <ZoomTrack><ZoomThumb /><ZoomTick /></ZoomTrack>
    <ZoomSign>+</ZoomSign>
    <ZoomValue>65%</ZoomValue>
  </StatusBar>
)

const ContextMenu = () => (
  <Menu>
    <MenuSearch>Search the menus</MenuSearch>
    <MenuList>
      <MenuItem><MenuIcon><Scissors /></MenuIcon><MenuText>Cu<u>t</u></MenuText></MenuItem>
      <MenuItem $hover><MenuIcon><CopyIcon /></MenuIcon><MenuText><u>C</u>opy</MenuText></MenuItem>
      <MenuItem $h={49} $bold><MenuIcon $top={-12}><PasteBoard w={24} h={26} /></MenuIcon><MenuText>Paste Options:</MenuText></MenuItem>
      <PasteRow><PasteBoard w={32} h={35} /></PasteRow>
      <MenuItem $muted><MenuIcon /><MenuText>Paste <u>S</u>pecial...</MenuText></MenuItem>
      <MenuSep />
      <MenuItem><MenuIcon /><MenuText><u>I</u>nsert...</MenuText></MenuItem>
      <MenuItem><MenuIcon /><MenuText><u>D</u>elete...</MenuText></MenuItem>
      <MenuItem><MenuIcon /><MenuText>Clear Co<u>n</u>tents</MenuText></MenuItem>
      <MenuSep />
      <MenuItem><MenuIcon><TranslateIcon /></MenuIcon><MenuText>Translate</MenuText></MenuItem>
      <MenuSep />
      <MenuItem><MenuIcon><QuickAnalysisIcon /></MenuIcon><MenuText><u>Q</u>uick Analysis</MenuText></MenuItem>
      <MenuItem><MenuIcon /><MenuText>Filt<u>e</u>r</MenuText><MenuArrow><Chevron size={20} dir="right" width={0.8} /></MenuArrow></MenuItem>
      <MenuItem><MenuIcon /><MenuText>S<u>o</u>rt</MenuText><MenuArrow><Chevron size={20} dir="right" width={0.8} /></MenuArrow></MenuItem>
      <MenuSep />
      <MenuItem><MenuIcon><DataTableIcon /></MenuIcon><MenuText><u>G</u>et Data from Table/Range...</MenuText></MenuItem>
      <MenuSep />
      <MenuItem><MenuIcon><CommentIcon /></MenuIcon><MenuText>New Co<u>m</u>ment</MenuText></MenuItem>
      <MenuItem><MenuIcon><NoteIcon /></MenuIcon><MenuText><u>N</u>ew Note</MenuText></MenuItem>
      <MenuSep />
      <MenuItem><MenuIcon><FormatCellsIcon /></MenuIcon><MenuText><u>F</u>ormat Cells...</MenuText></MenuItem>
      <MenuItem><MenuIcon /><MenuText>Pic<u>k</u> From Drop-down List...</MenuText></MenuItem>
      <MenuItem><MenuIcon /><MenuText>Define Name...</MenuText></MenuItem>
    </MenuList>
    <MenuFooter><Chevron size={12} width={1.8} /></MenuFooter>
  </Menu>
)

export default function App() {
  return (
    <Page>
      <GlobalStyle />
      <TopStrip>
        <TabMark />
        <ShareButton />
        <GreenButton />
      </TopStrip>
      <RibbonBar />
      <Formula />
      <Sheet />
      <Tabs />
      <Status />
      <BottomEdge />
      <ContextMenu />
      <PointerSlot><CursorIcon /></PointerSlot>
    </Page>
  )
}
